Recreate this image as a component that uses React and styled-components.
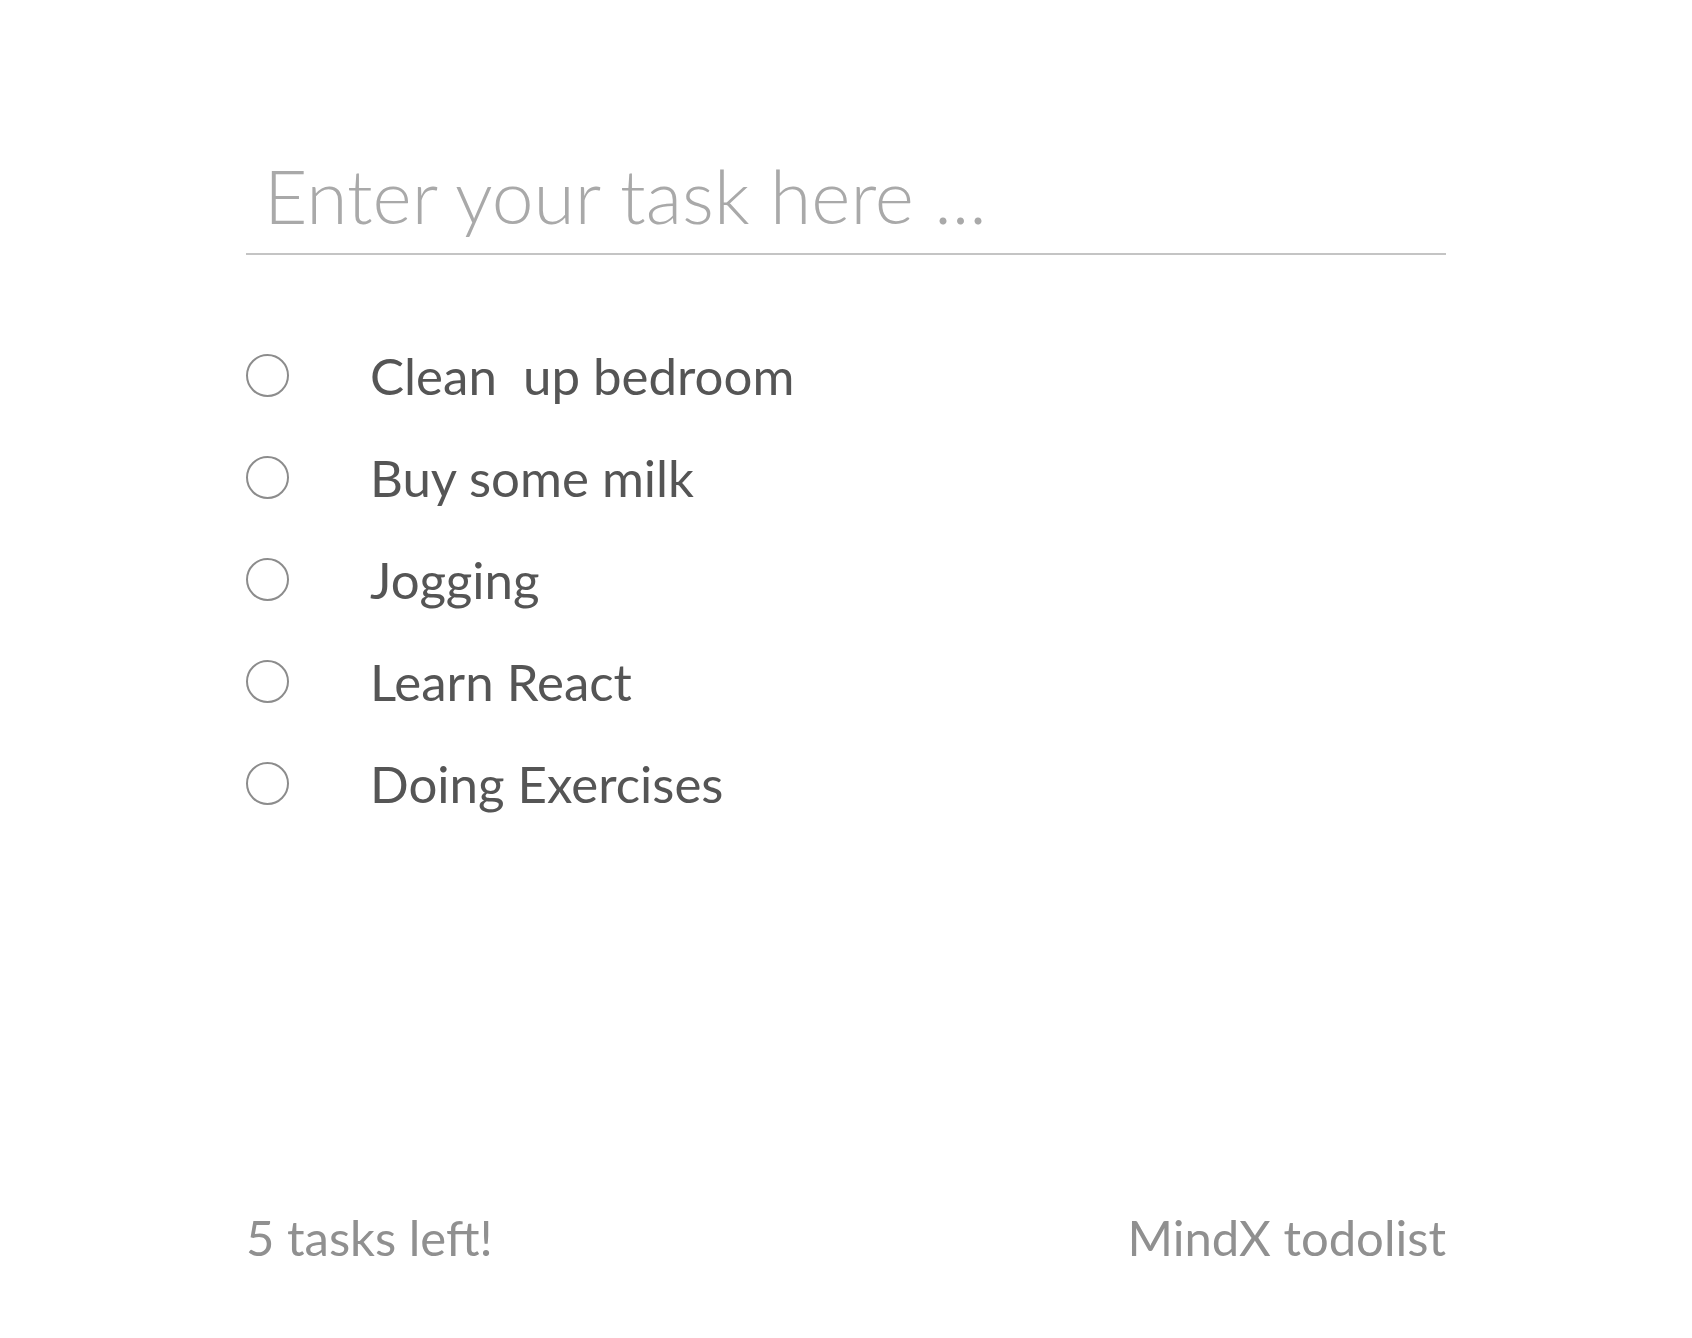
import React from 'react';
import styled, { createGlobalStyle } from 'styled-components';

const GlobalStyle = createGlobalStyle`
    html, body {
        margin: 0;
        padding: 0;
        background: #ffffff;
    }
    body {
        font-family: "Lato", "Open Sans", sans-serif;
    }
`

const Page = styled.div`
    min-height: 100vh;
    width: 1200px;
    margin: 0 auto;
    display: flex;
    flex-direction: column;
    box-sizing: border-box;
    padding-bottom: 76px;
`

const TaskInput = styled.input`
    margin-top: 145px;
    height: 110px;
    box-sizing: border-box;
    border: none;
    border-bottom: 2px solid #c4c4c4;
    outline: none;
    padding: 0 18px 9px;
    font-family: "Lato", sans-serif;
    font-weight: 300;
    font-size: 75px;
    color: #555;
    &::placeholder {
        color: #a9a9a9;
    }
`

const List = styled.ul`
    list-style: none;
    margin: 69px 0 0;
    padding: 0;
`

const Item = styled.li`
    display: flex;
    align-items: center;
    height: 102px;
    gap: 81px;
`

const Check = styled.span`
    width: 43px;
    height: 43px;
    box-sizing: border-box;
    border-radius: 50%;
    border: 2px solid #8c8c8c;
    flex-shrink: 0;
`

const Label = styled.span`
    font-size: 51px;
    color: #555555;
    white-space: pre;
`

const Footer = styled.div`
    margin-top: auto;
    display: flex;
    justify-content: space-between;
    font-size: 49px;
    font-weight: 400;
    color: #909090;
    line-height: 1;
`

const tasks = ['Clean  up bedroom', 'Buy some milk', 'Jogging', 'Learn React', 'Doing Exercises']

const App = () => {
    return (
        <>
            <GlobalStyle />
            <Page>
                <TaskInput placeholder="Enter your task here ..." />
                <List>
                    {tasks.map(t => (
                        <Item key={t}>
                            <Check />
                            <Label>{t}</Label>
                        </Item>
                    ))}
                </List>
                <Footer>
                    <span>{tasks.length} tasks left!</span>
                    <span>MindX todolist</span>
                </Footer>
            </Page>
        </>
    )
}

export default App
